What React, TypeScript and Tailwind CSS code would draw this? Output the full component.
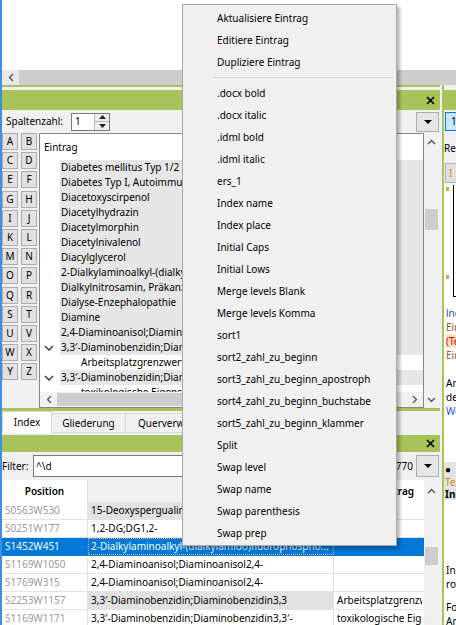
import React from "react";

const GREEN = "bg-[#a9c35b]";

function Chev({ dir, color = "#606060" }: { dir: "l" | "r" | "u" | "d"; color?: string }) {
  const horiz = dir === "l" || dir === "r";
  const d = {
    l: "M5 1L1.6 4.5L5 8",
    r: "M1 1L4.4 4.5L1 8",
    u: "M1 5L4.5 1.6L8 5",
    d: "M1 1L4.5 4.4L8 1",
  }[dir];
  return (
    <svg width={horiz ? 6 : 9} height={horiz ? 9 : 6} viewBox={horiz ? "0 0 6 9" : "0 0 9 6"}>
      <path d={d} stroke={color} strokeWidth="1.5" fill="none" />
    </svg>
  );
}

function TreeChev() {
  return (
    <svg width="10" height="6" viewBox="0 0 10 6">
      <path d="M1 1L5 5L9 1" stroke="#404040" strokeWidth="1.5" fill="none" />
    </svg>
  );
}

function CloseX() {
  return (
    <svg width="9" height="9" viewBox="0 0 9 9">
      <path d="M1 1L8 8M8 1L1 8" stroke="#000" strokeWidth="1.7" />
    </svg>
  );
}

function Tri({ up = false, w = 7, h = 4, color = "#000" }: { up?: boolean; w?: number; h?: number; color?: string }) {
  return (
    <svg width={w} height={h} viewBox={`0 0 ${w} ${h}`}>
      <polygon points={up ? `0,${h} ${w},${h} ${w / 2},0` : `0,0 ${w},0 ${w / 2},${h}`} fill={color} />
    </svg>
  );
}

const letters = "ABCDEFGHIJKLMNOPQRSTUVWXYZ".split("");

type TreeRow = { t: string; lvl: number; bg: boolean; chev?: boolean };
const tree: TreeRow[] = [
  { t: "Diabetes mellitus Typ 1/2", lvl: 1, bg: true },
  { t: "Diabetes Typ I, Autoimmundiabetes", lvl: 1, bg: true },
  { t: "Diacetoxyscirpenol", lvl: 1, bg: true },
  { t: "Diacetylhydrazin", lvl: 1, bg: true },
  { t: "Diacetylmorphin", lvl: 1, bg: true },
  { t: "Diacetylnivalenol", lvl: 1, bg: true },
  { t: "Diacylglycerol", lvl: 1, bg: true },
  { t: "2-Dialkylaminoalkyl-(dialkylamido)fluorophosphonate", lvl: 1, bg: true },
  { t: "Dialkylnitrosamin, Präkanzerose", lvl: 1, bg: true },
  { t: "Dialyse-Enzephalopathie", lvl: 1, bg: true },
  { t: "Diamine", lvl: 1, bg: true },
  { t: "2,4-Diaminoanisol;Diaminoanisol2,4-", lvl: 1, bg: true },
  { t: "3,3′-Diaminobenzidin;Diaminobenzidin3,3", lvl: 1, bg: true, chev: true },
  { t: "Arbeitsplatzgrenzwert", lvl: 2, bg: false },
  { t: "3,3′-Diaminobenzidin;Diaminobenzidin3,3′-", lvl: 1, bg: true, chev: true },
  { t: "toxikologische Eigenschaften", lvl: 2, bg: false },
];

type TRow = { p: string; e: string; q: string; bg2?: boolean; sel?: boolean };
const rows: TRow[] = [
  { p: "S0563W530", e: "15-Deoxyspergualin", q: "", bg2: true },
  { p: "S0251W177", e: "1,2-DG;DG1,2-", q: "" },
  { p: "S1452W451", e: "2-Dialkylaminoalkyl-(dialkylamido)fluorophosphonate", q: "", sel: true },
  { p: "S1169W1050", e: "2,4-Diaminoanisol;Diaminoanisol2,4-", q: "" },
  { p: "S1769W315", e: "2,4-Diaminoanisol;Diaminoanisol2,4-", q: "" },
  { p: "S2253W1157", e: "3,3′-Diaminobenzidin;Diaminobenzidin3,3", q: "Arbeitsplatzgrenzwert", bg2: true },
  { p: "S1169W1171", e: "3,3′-Diaminobenzidin;Diaminobenzidin3,3′-", q: "toxikologische Eigenschaften" },
];

const menuTop = ["Aktualisiere Eintrag", "Editiere Eintrag", "Dupliziere Eintrag"];
const menuBottom = [
  ".docx bold",
  ".docx italic",
  ".idml bold",
  ".idml italic",
  "ers_1",
  "Index name",
  "Index place",
  "Initial Caps",
  "Initial Lows",
  "Merge levels Blank",
  "Merge levels Komma",
  "sort1",
  "sort2_zahl_zu_beginn",
  "sort3_zahl_zu_beginn_apostroph",
  "sort4_zahl_zu_beginn_buchstabe",
  "sort5_zahl_zu_beginn_klammer",
  "Split",
  "Swap level",
  "Swap name",
  "Swap parenthesis",
  "Swap prep",
];

function ContextMenu() {
  return (
    <div className="absolute left-[182px] top-[4px] w-[215px] bg-[#f0f0f0] border border-[#a8a8a8] shadow-[3px_3px_3px_rgba(0,0,0,0.28)] pt-[2px] pb-[1px]">
      {menuTop.map((m) => (
        <div key={m} className="h-[22px] flex items-center pl-[34px] whitespace-nowrap">
          {m}
        </div>
      ))}
      <div className="h-[9px] flex items-center">
        <div className="ml-[30px] mr-[3px] flex-1 h-px bg-[#d2d2d2]" />
      </div>
      {menuBottom.map((m) => (
        <div key={m} className="h-[22px] flex items-center pl-[34px] whitespace-nowrap">
          {m}
        </div>
      ))}
    </div>
  );
}

function LeftPanel() {
  return (
    <div className="w-[438px] flex flex-col bg-[#f0f0f0] shrink-0">
      <div className={`h-[2px] ${GREEN}`} />
      <div className="h-[3px]" />
      <div className={`h-[20px] ${GREEN} flex items-center justify-end pr-[5px]`}>
        <CloseX />
      </div>
      {/* Spaltenzahl row */}
      <div className="h-[23px] flex items-center">
        <span className="w-[69px] pl-[4px] whitespace-nowrap">Spaltenzahl:</span>
        <div className="w-[39px] h-[18px] bg-white border border-[#7a7a7a] flex">
          <span className="flex-1 pl-[3px] flex items-center">1</span>
          <div className="w-[15px] flex flex-col border-l border-[#b5b5b5]">
            <div className="flex-1 flex items-center justify-center bg-[#f0f0f0] border-b border-[#b5b5b5]">
              <Tri up w={7} h={4} color="#222" />
            </div>
            <div className="flex-1 flex items-center justify-center bg-[#f0f0f0]">
              <Tri w={7} h={4} color="#222" />
            </div>
          </div>
        </div>
        <div className="flex-1" />
        <div className="w-[23px] h-[20px] mr-[1px] bg-[#e5e5e5] border border-[#adadad] flex items-center justify-center">
          <Tri w={8} h={4} />
        </div>
      </div>
      {/* Tree row */}
      <div className="h-[275px] flex">
        <div className="w-[35px] mr-[2px] grid grid-cols-[16px_16px] gap-x-[3px] gap-y-[2.2px] content-start">
          {letters.map((l) => (
            <div key={l} className="h-[17px] bg-[#e1e1e1] border border-[#adadad] flex items-center justify-center">
              {l}
            </div>
          ))}
        </div>
        <div className="w-[385px] border border-[#828790] bg-white flex flex-col">
          <div className="h-[26px] flex items-center pl-[4px]">Eintrag</div>
          <div className="flex-1 overflow-hidden">
            {tree.map((r, i) => (
              <div key={i} className="h-[15px] flex whitespace-nowrap">
                <div className="w-[20px] shrink-0 flex items-center pl-[4px]">{r.chev ? <TreeChev /> : null}</div>
                {r.lvl === 2 ? <div className="w-[20px] shrink-0" /> : null}
                <div className={`flex-1 overflow-hidden flex items-center pl-[1px] ${r.bg ? "bg-[#e6e6e6]" : ""}`}>{r.t}</div>
              </div>
            ))}
          </div>
          <div className="h-[15px] flex bg-[#f0f0f0]">
            <div className="w-[17px] flex items-center justify-center">
              <Chev dir="l" />
            </div>
            <div className="w-[338px] bg-[#cdcdcd] my-[1px]" />
            <div className="flex-1 flex items-center justify-end pr-[5px]">
              <Chev dir="r" />
            </div>
          </div>
        </div>
        <div className="w-[15px] flex flex-col bg-[#f0f0f0]">
          <div className="h-[17px] flex items-center justify-center">
            <Chev dir="u" />
          </div>
          <div className="flex-1">
            <div className="mt-[59px] h-[21px] mx-[1px] bg-[#cdcdcd]" />
          </div>
          <div className="h-[16px] flex items-center justify-center">
            <Chev dir="d" />
          </div>
        </div>
      </div>
      <div className={`h-[3px] ${GREEN}`} />
      {/* Tabs */}
      <div className="h-[22px] flex items-end">
        <div className="w-[50px] h-[22px] bg-white border border-b-0 border-[#d9d9d9] flex items-center justify-center">Index</div>
        <div className="w-[74px] h-[20px] border border-l-0 border-[#d9d9d9] flex items-center justify-center">Gliederung</div>
        <div className="w-[90px] h-[20px] border border-l-0 border-[#d9d9d9] flex items-center pl-[12px] whitespace-nowrap overflow-hidden">
          Querverweise
        </div>
      </div>
      <div className="h-[2px]" />
      <div className={`h-[17px] ${GREEN} flex items-center justify-end pr-[5px]`}>
        <CloseX />
      </div>
      {/* Filter row */}
      <div className="h-[28px] flex items-center">
        <span className="w-[31px] whitespace-nowrap">Filter:</span>
        <div className="w-[361px] h-[22px] bg-white border border-[#7a7a7a] flex items-center pl-[2px]">^\d</div>
        <span className="w-[22px] text-right pr-[3px]">770</span>
        <div className="w-[23px] h-[22px] bg-[#e5e5e5] border border-[#adadad] flex items-center justify-center">
          <Tri w={8} h={4} />
        </div>
      </div>
      {/* Table */}
      <div className="flex-1 flex min-h-0">
        <div className="w-[422px] bg-white flex flex-col overflow-hidden">
          <div className="h-[22px] flex shrink-0 font-semibold">
            <div className="w-[86px] flex items-center justify-center border-r border-[#e0e0e0]">Position</div>
            <div className="w-[246px] bg-[#f0f0f0] border-r border-[#e0e0e0]" />
            <div className="w-[88px] flex items-center justify-end pr-[8px] whitespace-nowrap overflow-hidden">Untereintrag</div>
          </div>
          {rows.map((r) => (
            <div
              key={r.p}
              className={`h-[18px] shrink-0 flex whitespace-nowrap border-b ${
                r.sel ? "bg-[#0078d7] text-white border-[#0078d7]" : "border-[#e3e3e3]"
              }`}
            >
              <div
                className={`w-[86px] flex items-center pl-[3px] border-r ${
                  r.sel ? "border-[#0078d7]" : "text-[#9b9b9b] border-[#e3e3e3]"
                }`}
              >
                {r.p}
              </div>
              <div
                className={`w-[246px] flex items-center border-r overflow-hidden ${
                  r.sel ? "border border-dotted border-[#f0b27a] pl-[2px]" : "pl-[3px] border-[#e3e3e3]"
                } ${r.bg2 ? "bg-[#e1e1e1]" : ""}`}
              >
                <span className="truncate">{r.e}</span>
              </div>
              <div className="w-[88px] flex items-center pl-[3px] overflow-hidden">{r.q}</div>
            </div>
          ))}
        </div>
        <div className="w-[15px] flex flex-col bg-[#f0f0f0]">
          <div className="h-[22px] flex items-center justify-center">
            <Chev dir="u" />
          </div>
          <div className="mt-[45px] h-[18px] mx-[1px] bg-[#cdcdcd]" />
        </div>
      </div>
    </div>
  );
}

function RightStrip() {
  return (
    <div className="w-[12px] flex flex-col bg-[#f0f0f0] overflow-hidden whitespace-nowrap">
      <div className="h-[5px] shrink-0" />
      <div className={`h-[20px] shrink-0 ${GREEN}`} />
      <div className="h-[2px] shrink-0" />
      <div className="h-[19px] shrink-0 ml-[1px] bg-[#cce4f7] border-l border-y border-[#0078d7] flex items-center pl-[5px]">1</div>
      <div className="h-[14px] mt-[10px] shrink-0 flex items-center">Register</div>
      <div className="h-[20px] mt-[8px] shrink-0 ml-[1px] bg-[#e1e1e1] border-l border-y border-[#adadad] flex items-center pl-[3px] text-[#d08a2a]">
        I
      </div>
      <div className="flex-1 bg-white flex flex-col">
        <div className="h-[112px] mt-[2px] flex shrink-0">
          <div className="w-[9px] flex flex-col justify-between pl-[2px] pt-[2px] pb-[18px]">
            <div className="w-[3px] h-[4px] bg-[#e0a040]" />
            <div className="w-[3px] h-[4px] bg-[#e0a040]" />
          </div>
          <div className="flex-1 border-l border-b border-black" />
        </div>
        <div className="mt-[9px] flex flex-col leading-[14px] pl-[2px]">
          <span className="text-[#1f4e9a]">lndex</span>
          <span className="text-[#a0522d]">Eintrag</span>
          <span className="text-[#e00000] bg-[#ffe1c8]">(Text)</span>
          <span className="text-[#a0522d]">Eintrag</span>
          <span>&nbsp;</span>
          <span>Anzahl</span>
          <span>der</span>
          <span className="text-[#1e4fc2]">Werte</span>
        </div>
        <div className="mt-[44px] h-[38px] bg-[#e3e3e3] flex flex-col leading-[12.5px] pt-[1px] pl-[1px]">
          <span>●</span>
          <span className="text-[#d08a2a]">Text</span>
          <span className="font-bold">Inhalt</span>
        </div>
        <div className="mt-[63px] flex flex-col leading-[14px] pl-[2px]">
          <span>Inhalt</span>
          <span>rot</span>
          <span className="mt-[9px]">Formel</span>
          <span>Anzahl</span>
        </div>
      </div>
    </div>
  );
}

export default function App() {
  return (
    <div className="relative w-[456px] h-[625px] overflow-hidden bg-white flex text-[10px] text-black font-['Noto_Sans',sans-serif]">
      <div className="w-[2px] h-full bg-[#3d8fe0] shrink-0" />
      <div className="w-[454px] flex flex-col">
        <div className="h-[70px] bg-white shrink-0" />
        <div className="h-[15px] shrink-0 flex bg-[#cdcdcd]">
          <div className="w-[17px] bg-[#e8e8e8] flex items-center justify-center">
            <Chev dir="l" />
          </div>
        </div>
        <div className="flex-1 flex min-h-0">
          <LeftPanel />
          <div className="w-[2px] bg-[#f0f0f0] shrink-0" />
          <div className={`w-[2px] ${GREEN} shrink-0`} />
          <RightStrip />
        </div>
      </div>
      <ContextMenu />
    </div>
  );
}
